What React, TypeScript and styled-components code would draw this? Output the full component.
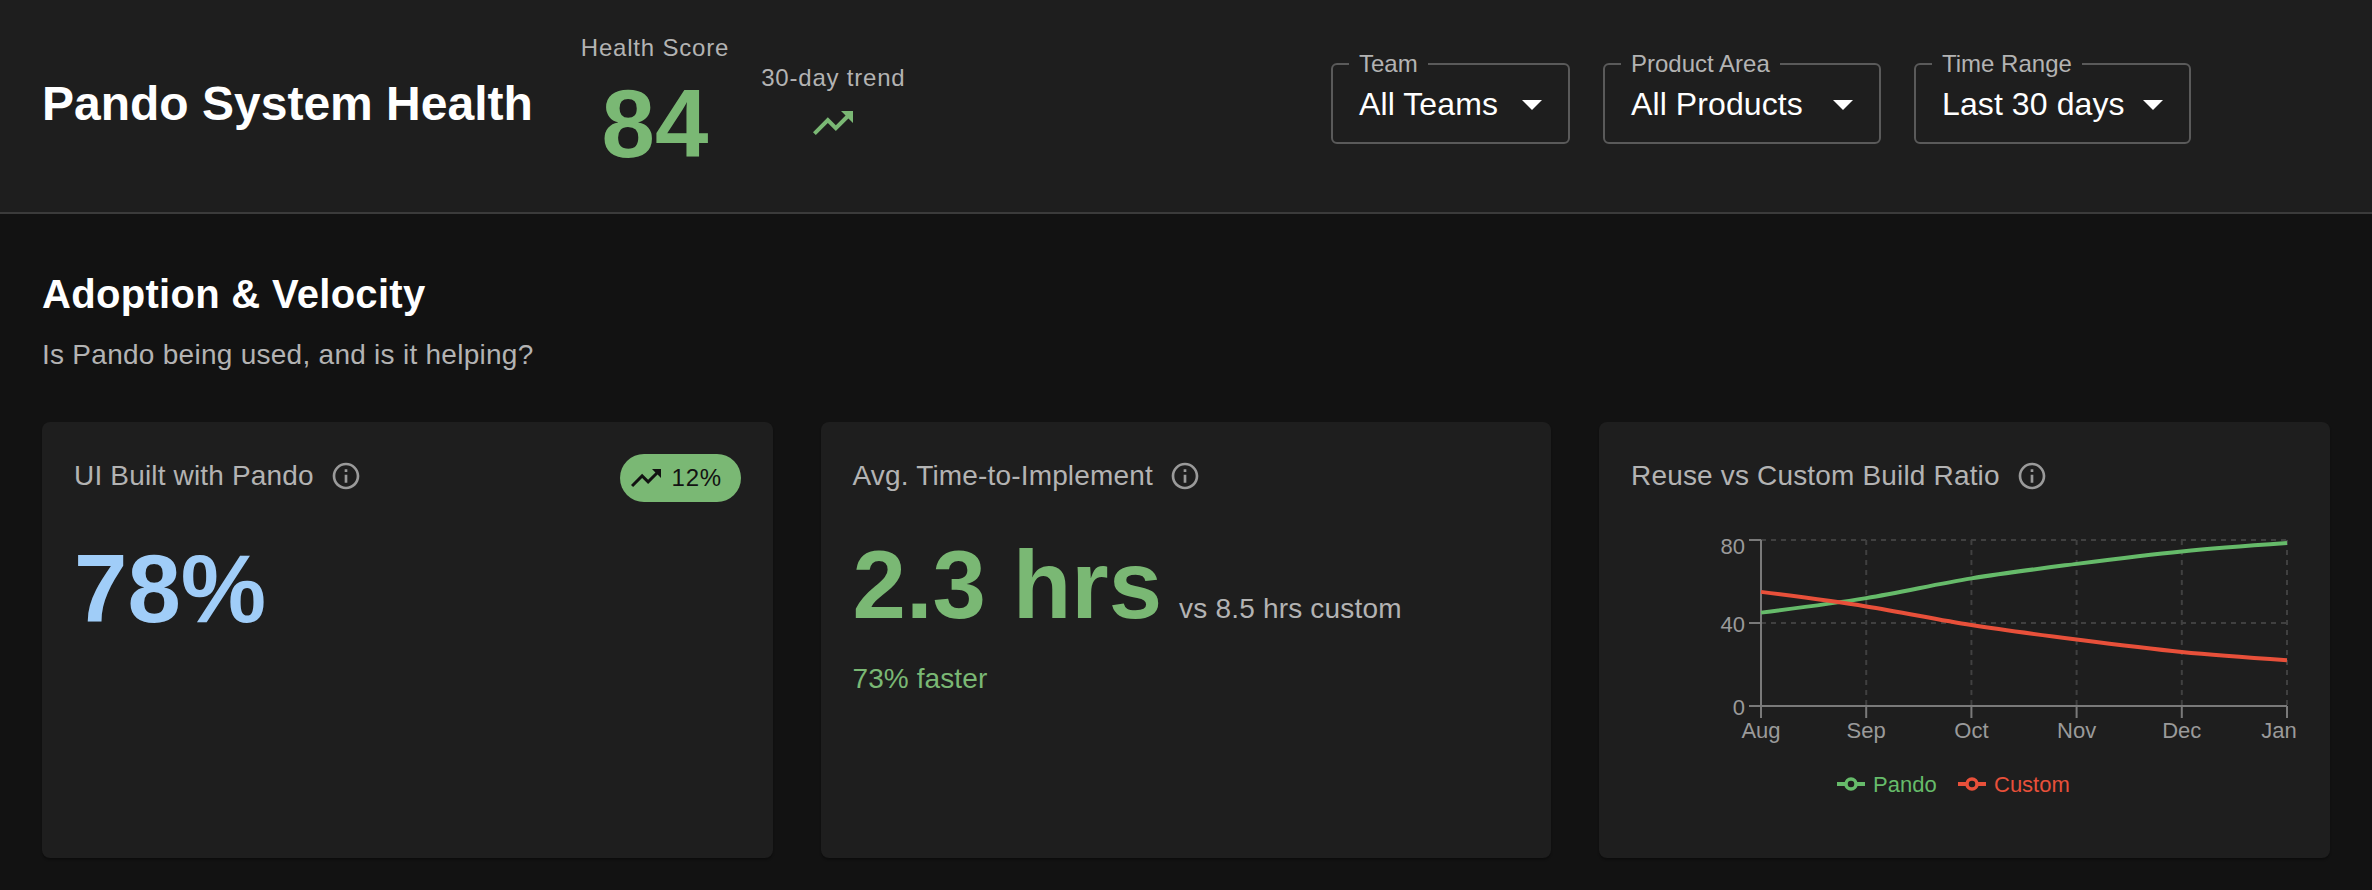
import React from "react";
import styled, { createGlobalStyle } from "styled-components";

const Global = createGlobalStyle`
  html, body { margin: 0; padding: 0; background: #121212; height: 890px; overflow: hidden; }
  body { font-family: "Liberation Sans", Arial, sans-serif; color: #fff; }
  * { box-sizing: border-box; }
`;

const Page = styled.div`
  width: 2372px;
  height: 890px;
  overflow: hidden;
  background: #121212;
`;

const Header = styled.header`
  height: 214px;
  padding: 0 181px 0 42px;
  display: flex;
  align-items: center;
  background: #1e1e1e;
  border-bottom: 2px solid #3b3b3b;
`;

const Title = styled.h1`
  margin: -5px 48px 0 0;
  font-size: 48px;
  font-weight: 700;
  line-height: 1.2;
  white-space: nowrap;
`;

const ScoreColumn = styled.div`
  display: flex;
  flex-direction: column;
  align-items: center;
  margin-top: -1px;
  margin-right: 32px;
`;

const Caption = styled.div`
  font-size: 24px;
  line-height: 36px;
  letter-spacing: 0.8px;
  color: #b3b3b3;
  white-space: nowrap;
`;

const Score = styled.div`
  font-size: 96px;
  font-weight: 700;
  line-height: 115px;
  color: #7ab874;
`;

const TrendColumn = styled.div`
  display: flex;
  flex-direction: column;
  align-items: center;
  margin-top: -6px;
  color: #7ab874;
`;

const TrendIcon = styled.svg`
  width: 48px;
  height: 48px;
  margin-top: 3px;
  fill: currentColor;
`;

const Filters = styled.div`
  margin-left: auto;
  display: flex;
  gap: 33px;
  margin-top: -16px;
`;

const Field = styled.fieldset<{ $w: number }>`
  width: ${(p) => p.$w}px;
  height: 92px;
  margin: 0;
  padding: 0;
  border: 2px solid #5a5a5a;
  border-radius: 6px;
  min-inline-size: 0;
`;

const FieldLegend = styled.legend`
  margin-left: 16px;
  padding: 0 10px;
  font-size: 24px;
  line-height: 24px;
  color: #b3b3b3;
  white-space: nowrap;
`;

const FieldRow = styled.div`
  height: 78px;
  margin-top: -11px;
  padding: 0 14px 0 26px;
  display: flex;
  align-items: center;
  justify-content: space-between;
  font-size: 32px;
  letter-spacing: 0.1px;
  color: #fff;
  white-space: nowrap;
`;

const Caret = styled.svg`
  width: 48px;
  height: 48px;
  margin-right: -2px;
  flex: none;
  fill: #fff;
`;

const Main = styled.main`
  padding: 0 42px;
`;

const SectionTitle = styled.h2`
  margin: 56px 0 0;
  font-size: 40px;
  font-weight: 700;
  line-height: 48px;
  letter-spacing: 0.3px;
`;

const SectionSub = styled.p`
  margin: 16px 0 0;
  font-size: 28px;
  line-height: 42px;
  letter-spacing: 0.27px;
  color: #b3b3b3;
`;

const Cards = styled.div`
  margin-top: 46px;
  display: grid;
  grid-template-columns: repeat(3, 1fr);
  gap: 48px;
`;

const Card = styled.section`
  height: 436px;
  padding: 32px;
  background: #1e1e1e;
  border-radius: 8px;
  box-shadow: 0 2px 2px rgba(0, 0, 0, 0.3);
`;

const CardHead = styled.div`
  height: 48px;
  display: flex;
  justify-content: space-between;
  align-items: flex-start;
`;

const CardLabel = styled.div`
  display: flex;
  align-items: center;
  gap: 16px;
  height: 44px;
  font-size: 28px;
  letter-spacing: 0.17px;
  color: #b3b3b3;
  white-space: nowrap;
`;

const InfoIcon = styled.svg`
  width: 32px;
  height: 32px;
  fill: #9a9a9a;
  flex: none;
`;

const Chip = styled.div`
  height: 48px;
  width: 121px;
  border-radius: 24px;
  background: #7ab874;
  color: #121212;
  display: flex;
  align-items: center;
  gap: 8px;
  padding-left: 8px;
  font-size: 24px;
  letter-spacing: 0.8px;
`;

const ChipIcon = styled.svg`
  width: 36px;
  height: 36px;
  flex: none;
  fill: currentColor;
`;

const BigValue = styled.div<{ $color: string }>`
  font-size: 96px;
  font-weight: 700;
  line-height: 115px;
  color: ${(p) => p.$color};
`;

const ValueFirst = styled(BigValue)`
  margin-top: 29px;
`;

const ValueRow = styled.div`
  margin-top: 25px;
  display: flex;
  align-items: baseline;
  gap: 17px;
`;

const ValueNote = styled.span`
  font-size: 28px;
  letter-spacing: 0.2px;
  color: #b3b3b3;
`;

const Faster = styled.div`
  margin-top: 16px;
  font-size: 28px;
  line-height: 42px;
  letter-spacing: 0.1px;
  color: #7ab874;
`;

const ChartSvg = styled.svg`
  display: block;
  margin-top: 8px;
  font-family: "Liberation Sans", Arial, sans-serif;
`;

const TREND = "m16 6 2.29 2.29-4.88 4.88-4-4L2 16.59 3.41 18l6-6 4 4 6.3-6.29L22 12V6z";
const INFO =
  "M11 7h2v2h-2zm0 4h2v6h-2zm1-9C6.48 2 2 6.48 2 12s4.48 10 10 10 10-4.48 10-10S17.52 2 12 2m0 18c-4.41 0-8-3.59-8-8s3.59-8 8-8 8 3.59 8 8-3.59 8-8 8";

const Info = () => (
  <InfoIcon viewBox="0 0 24 24">
    <path d={INFO} />
  </InfoIcon>
);

const Select = ({ label, value, w }: { label: string; value: string; w: number }) => (
  <Field $w={w}>
    <FieldLegend>{label}</FieldLegend>
    <FieldRow>
      {value}
      <Caret viewBox="0 0 24 24">
        <path d="m7 10 5 5 5-5z" />
      </Caret>
    </FieldRow>
  </Field>
);

const X0 = 1761;
const STEP = (2287 - 1761) / 5;
const Y0 = 706;
const UNIT = 166 / 80;
const months = ["Aug", "Sep", "Oct", "Nov", "Dec", "Jan"];
const pando = [45, 52, 61.5, 68.5, 74.5, 78.5];
const custom = [55, 48, 39, 32, 26, 22];

function monotone(values: number[]): string {
  const pts = values.map((v, i) => [X0 + i * STEP, Y0 - v * UNIT]);
  const n = pts.length;
  const sl: number[] = [];
  for (let i = 0; i < n - 1; i++) sl.push((pts[i + 1][1] - pts[i][1]) / STEP);
  const t: number[] = new Array(n).fill(0);
  for (let i = 1; i < n - 1; i++) {
    const a = sl[i - 1];
    const b = sl[i];
    t[i] = a * b <= 0 ? 0 : Math.sign(a) * Math.min(2 * Math.abs(a), 2 * Math.abs(b), Math.abs(a + b) / 2);
  }
  t[0] = (3 * sl[0] - t[1]) / 2;
  t[n - 1] = (3 * sl[n - 2] - t[n - 2]) / 2;
  let d = `M${pts[0][0]},${pts[0][1]}`;
  for (let i = 0; i < n - 1; i++) {
    const h = STEP / 3;
    d += `C${pts[i][0] + h},${pts[i][1] + h * t[i]} ${pts[i + 1][0] - h},${pts[i + 1][1] - h * t[i + 1]} ${pts[i + 1][0]},${pts[i + 1][1]}`;
  }
  return d;
}

const GREEN = "#66bb6a";
const RED = "#e8503a";
const GRID = "#404040";
const AXIS = "#7a7a7a";
const TICK = "#9a9a9a";

const Chart = () => (
  <ChartSvg width={667} height={300} viewBox="1631 510 667 300">
    {months.slice(1).map((_, i) => (
      <line key={i} x1={X0 + (i + 1) * STEP} x2={X0 + (i + 1) * STEP} y1={540} y2={706} stroke={GRID} strokeWidth={2} strokeDasharray="5 5" />
    ))}
    {[540, 623].map((y) => (
      <line key={y} x1={1761} x2={2287} y1={y} y2={y} stroke={GRID} strokeWidth={2} strokeDasharray="5 5" />
    ))}
    <path d="M1761 540V706H2287" fill="none" stroke={AXIS} strokeWidth={2} />
    {[540, 623, 706].map((y) => (
      <line key={y} x1={1749} x2={1761} y1={y} y2={y} stroke={AXIS} strokeWidth={2} />
    ))}
    {months.map((_, i) => (
      <line key={i} x1={X0 + i * STEP} x2={X0 + i * STEP} y1={706} y2={718} stroke={AXIS} strokeWidth={2} />
    ))}
    {[
      ["80", 554],
      ["40", 632],
      ["0", 714.5],
    ].map(([t, y]) => (
      <text key={t} x={1745} y={y} textAnchor="end" fontSize={22} fill={TICK}>
        {t}
      </text>
    ))}
    {months.map((m, i) => (
      <text key={m} x={i === 5 ? 2279 : X0 + i * STEP} y={738} textAnchor="middle" fontSize={22} fill={TICK}>
        {m}
      </text>
    ))}
    <path d={monotone(pando)} fill="none" stroke={GREEN} strokeWidth={4} />
    <path d={monotone(custom)} fill="none" stroke={RED} strokeWidth={4} />
    <line x1={1837} x2={1865} y1={784} y2={784} stroke={GREEN} strokeWidth={4} />
    <circle cx={1851} cy={784} r={5} fill="#1e1e1e" stroke={GREEN} strokeWidth={3.5} />
    <text x={1873} y={792} fontSize={22} fill={GREEN}>
      Pando
    </text>
    <line x1={1958} x2={1986} y1={784} y2={784} stroke={RED} strokeWidth={4} />
    <circle cx={1972} cy={784} r={5} fill="#1e1e1e" stroke={RED} strokeWidth={3.5} />
    <text x={1994} y={792} fontSize={22} fill={RED}>
      Custom
    </text>
  </ChartSvg>
);

export default function App() {
  return (
    <Page>
      <Global />
      <Header>
        <Title>Pando System Health</Title>
        <ScoreColumn>
          <Caption>Health Score</Caption>
          <Score>84</Score>
        </ScoreColumn>
        <TrendColumn>
          <Caption>30-day trend</Caption>
          <TrendIcon viewBox="0 0 24 24">
            <path d={TREND} />
          </TrendIcon>
        </TrendColumn>
        <Filters>
          <Select label="Team" value="All Teams" w={239} />
          <Select label="Product Area" value="All Products" w={278} />
          <Select label="Time Range" value="Last 30 days" w={277} />
        </Filters>
      </Header>
      <Main>
        <SectionTitle>Adoption &amp; Velocity</SectionTitle>
        <SectionSub>Is Pando being used, and is it helping?</SectionSub>
        <Cards>
          <Card>
            <CardHead>
              <CardLabel>
                UI Built with Pando
                <Info />
              </CardLabel>
              <Chip>
                <ChipIcon viewBox="0 0 24 24">
                  <path d={TREND} />
                </ChipIcon>
                12%
              </Chip>
            </CardHead>
            <ValueFirst $color="#a0cdf8">78%</ValueFirst>
          </Card>
          <Card>
            <CardHead>
              <CardLabel>
                Avg. Time-to-Implement
                <Info />
              </CardLabel>
            </CardHead>
            <ValueRow>
              <BigValue $color="#7ab874">2.3 hrs</BigValue>
              <ValueNote>vs 8.5 hrs custom</ValueNote>
            </ValueRow>
            <Faster>73% faster</Faster>
          </Card>
          <Card>
            <CardHead>
              <CardLabel>
                Reuse vs Custom Build Ratio
                <Info />
              </CardLabel>
            </CardHead>
            <Chart />
          </Card>
        </Cards>
      </Main>
    </Page>
  );
}
